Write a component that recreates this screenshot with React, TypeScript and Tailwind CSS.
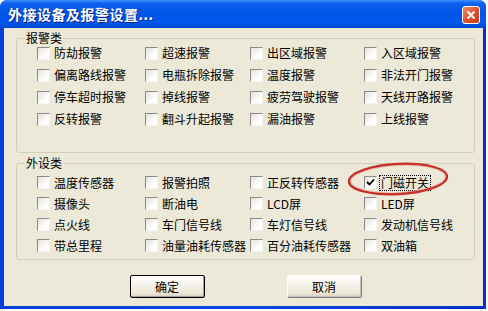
const alarms = [
  ['防劫报警', '超速报警', '出区域报警', '入区域报警'],
  ['偏离路线报警', '电瓶拆除报警', '温度报警', '非法开门报警'],
  ['停车超时报警', '掉线报警', '疲劳驾驶报警', '天线开路报警'],
  ['反转报警', '翻斗升起报警', '漏油报警', '上线报警'],
]

const devices = [
  ['温度传感器', '报警拍照', '正反转传感器', '门磁开关'],
  ['摄像头', '断油电', 'LCD屏', 'LED屏'],
  ['点火线', '车门信号线', '车灯信号线', '发动机信号线'],
  ['带总里程', '油量油耗传感器', '百分油耗传感器', '双油箱'],
]

function Check({ label, checked }: { label: string; checked?: boolean }) {
  return (
    <div className="flex items-center h-full">
      <span className="w-[13px] h-[13px] shrink-0 border border-t-[#8a8a8a] border-l-[#8a8a8a] border-b-[#f4f4f4] border-r-[#f4f4f4] bg-[linear-gradient(135deg,#e4e3dc,#ffffff_70%)] flex items-center justify-center">
        {checked && (
          <svg width="9" height="9" viewBox="0 0 9 9">
            <path d="M1 4 L3.5 6.5 L8 1.5" stroke="#000" strokeWidth="1.8" fill="none" />
          </svg>
        )}
      </span>
      <span
        className={
          'ml-[3px] px-[1px] leading-[14px] ' +
          (checked ? 'outline outline-1 outline-dotted outline-black' : '')
        }
      >
        {label}
      </span>
    </div>
  )
}

function Group({
  title,
  rows,
  className,
  gridClass,
}: {
  title: string
  rows: string[][]
  className: string
  gridClass: string
}) {
  return (
    <fieldset className={'border border-[#d0d0bf] rounded-[3px] mx-0 ' + className}>
      <legend className="ml-[8px] px-[1px] leading-[14px]">{title}</legend>
      <div className={'grid grid-cols-[108px_105px_114px_1fr] pl-[20px] ' + gridClass}>
        {rows.flat().map((t) => (
          <Check key={t} label={t} checked={t === '门磁开关'} />
        ))}
      </div>
    </fieldset>
  )
}

export default function App() {
  return (
    <div className="w-[488px] h-[311px] bg-white relative font-['Noto_Sans_CJK_SC',sans-serif] text-[12px] text-black">
      <div className="w-[486px] h-[309px] flex flex-col rounded-t-[7px] overflow-hidden bg-[linear-gradient(90deg,#0740d8,#0848e0_50%,#0631c8)]">
        <div className="h-[28px] shrink-0 flex items-center justify-between pl-[8px] pr-[6px] bg-[linear-gradient(180deg,#3d95ff,#0a5fec_12%,#0055e5_45%,#0058ee_80%,#0049d6)]">
          <span className="text-white font-bold text-[14px] leading-none [text-shadow:1px_1px_0_#0a1e80] tracking-[0.5px]">
            外接设备及报警设置...
          </span>
          <div className="w-[18px] h-[18px] mt-[2px] rounded-[3px] border border-white bg-[linear-gradient(135deg,#f08a6a,#e0512c_50%,#c53a16)] flex items-center justify-center">
            <svg width="10" height="10" viewBox="0 0 10 10">
              <path d="M1.5 1.5 L8.5 8.5 M8.5 1.5 L1.5 8.5" stroke="#fff" strokeWidth="2" />
            </svg>
          </div>
        </div>
        <div className="flex-1 ml-[4px] mr-[3px] mb-[3px] bg-[#ece9d8] pl-[12px] pr-[8px] pt-[3px] flex flex-col">
          <Group title="报警类" rows={alarms} className="h-[122px]" gridClass="auto-rows-[22px] -mt-[3px]" />
          <Group
            title="外设类"
            rows={devices}
            className="h-[104px] mt-[3px]"
            gridClass="auto-rows-[21px] mt-[2px]"
          />
          <div className="flex justify-center gap-[82px] mt-[15px]">
            <button className="w-[75px] h-[23px] border border-black rounded-[2px] bg-[linear-gradient(180deg,#ffffff,#ece9d8_80%,#d6d0c0)] shadow-[inset_-1px_-1px_0_#a0a0a0]">
              确定
            </button>
            <button className="w-[75px] h-[23px] border border-[#808080] border-t-white border-l-white rounded-[2px] bg-[linear-gradient(180deg,#ffffff,#ece9d8_80%,#d6d0c0)] shadow-[inset_-1px_-1px_0_#c0c0c0]">
              取消
            </button>
          </div>
        </div>
      </div>
      <svg className="absolute left-[346px] top-[160px]" width="104" height="38" viewBox="0 0 104 38">
        <ellipse cx="52" cy="19" rx="49" ry="15" transform="rotate(-3 52 19)" fill="none" stroke="#c9302a" strokeWidth="2.5" />
        <ellipse cx="52" cy="19" rx="47.5" ry="13.5" transform="rotate(-3 52 19)" fill="none" stroke="#e9a6a0" strokeWidth="1" opacity="0.6" />
      </svg>
    </div>
  )
}
